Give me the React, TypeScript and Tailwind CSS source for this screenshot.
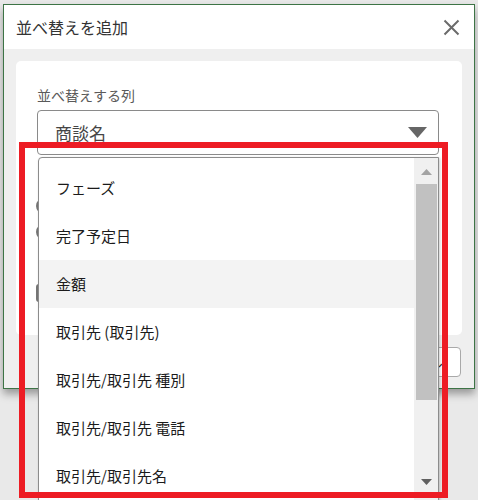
import React from 'react'

const font = { fontFamily: '"Noto Sans CJK JP", "Noto Sans", sans-serif' }

const items = [
  'フェーズ',
  '完了予定日',
  '金額',
  '取引先 (取引先)',
  '取引先/取引先 種別',
  '取引先/取引先 電話',
  '取引先/取引先名',
]

export default function App() {
  return (
    <div className="relative w-[478px] h-[500px] overflow-hidden bg-[#e9e9e9] pt-[4px] pl-[3px]" style={font}>
      {/* dialog */}
      <div className="w-[472px] h-[385px] border border-[#3d7446] bg-[#efefef] shadow-[0_5px_8px_rgba(0,0,0,0.35)] flex flex-col">
        <div className="h-[44px] bg-white flex items-center justify-between pl-[12px] pr-[14px]">
          <span className="text-[16px] text-[#333]">並べ替えを追加</span>
          <svg width="17" height="17" viewBox="0 0 17 17">
            <path d="M1.5 1.5 L15.5 15.5 M15.5 1.5 L1.5 15.5" stroke="#6b6b6b" strokeWidth="2" />
          </svg>
        </div>
        <div className="px-[12px] pt-[12px]">
          <div className="h-[274px] bg-white rounded-[5px] pl-[21px] pr-[23px] pt-[24px]">
            <div className="text-[14px] leading-[20px] text-[#5a5a5a]">並べ替えする列</div>
            <div className="mt-[5px] h-[45px] border border-[#8a8a8a] rounded-[4px] flex items-center justify-between pl-[17px] pr-[11px]">
              <span className="text-[17px] text-[#454545]">商談名</span>
              <svg width="19" height="11" viewBox="0 0 19 11">
                <path d="M0 0 H19 L9.5 11 Z" fill="#666" />
              </svg>
            </div>
            {/* controls hidden under the open list */}
            <div className="mt-[43px] flex flex-col gap-[10px]">
              <div className="w-[16px] h-[16px] rounded-full border-2 border-[#777] ml-[-1px]" />
              <div className="w-[16px] h-[16px] rounded-full border-2 border-[#777] ml-[-1px]" />
              <div className="mt-[34px] w-[40px] h-[18px] rounded-[3px] border-2 border-[#777] ml-[-1px]" />
            </div>
          </div>
          <div className="flex justify-end mt-[12px] pr-[1px]">
            <button className="h-[30px] pl-[19px] pr-[17px] bg-white border border-[#a9a9a9] rounded-[4px] text-[16px] leading-[20px] text-[#333]">
              キャンセル
            </button>
          </div>
        </div>
      </div>

      {/* open dropdown list */}
      <div className="absolute left-[38px] top-[157px] w-[401px] h-[345px] bg-white border border-[#8c8c8c] rounded-tl-[4px] shadow-[1px_1px_3px_rgba(0,0,0,0.2)] flex">
        <div className="flex-1 pt-[6px]">
          {items.map((t) => (
            <div
              key={t}
              className={`h-[48px] flex items-center pl-[17px] text-[15px] text-[#1b1b1b] ${t === '金額' ? 'bg-[#f3f3f3]' : ''}`}
            >
              {t}
            </div>
          ))}
        </div>
        <div className="w-[24px] bg-[#f0f0f0] flex flex-col items-center">
          <svg className="mt-[11px]" width="11" height="6" viewBox="0 0 11 6">
            <path d="M0 6 H11 L5.5 0 Z" fill="#a3a3a3" />
          </svg>
          <div className="mt-[9px] w-[21px] h-[216px] bg-[#c1c1c1]" />
          <svg className="mt-[79px]" width="11" height="6" viewBox="0 0 11 6">
            <path d="M0 0 H11 L5.5 6 Z" fill="#606060" />
          </svg>
        </div>
      </div>

      {/* annotation */}
      <div className="absolute left-[19px] top-[142px] w-[429px] h-[356px] border-[6px] border-[#ed1c24]" />
    </div>
  )
}
